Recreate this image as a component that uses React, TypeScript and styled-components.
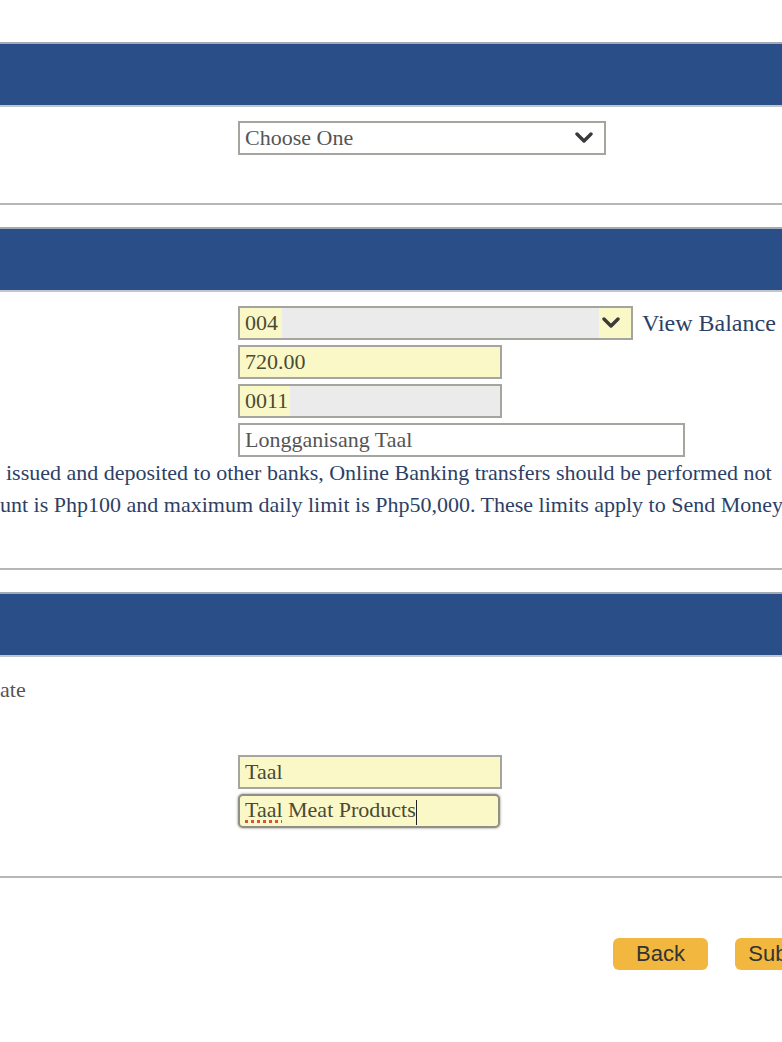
import React from "react";
import styled, { createGlobalStyle } from "styled-components";

const GlobalStyle = createGlobalStyle`
  html, body {
    margin: 0;
    padding: 0;
    background: #fff;
    overflow: hidden;
  }
  body {
    font-family: "Liberation Serif", "Times New Roman", serif;
  }
`;

const Page = styled.div`
  width: 782px;
  height: 1042px;
  overflow: hidden;
  padding-top: 42px;
  box-sizing: border-box;
`;

const Section = styled.section<{ gapTop?: number }>`
  margin-top: ${({ gapTop }) => gapTop ?? 0}px;
`;

const Band = styled.div`
  height: 61px;
  background: #2a4e88;
  border-top: 2px solid #a3aab5;
  border-bottom: 2px solid #c1c6ce;
`;

const Body = styled.div<{ pt: number; pb: number }>`
  padding: ${({ pt, pb }) => `${pt}px 0 ${pb}px`};
`;

const Rule = styled.div`
  height: 2px;
  background: #b7b7b7;
`;

const FieldColumn = styled.div`
  margin-left: 238px;
  display: flex;
  flex-direction: column;
  gap: 5px;
`;

const Row = styled.div`
  display: flex;
  align-items: center;
  gap: 9px;
`;

const Field = styled.div<{ w: number; bg?: string; focused?: boolean }>`
  position: relative;
  width: ${({ w }) => w}px;
  height: 34px;
  box-sizing: border-box;
  border: 2px solid ${({ focused }) => (focused ? "#8f8f86" : "#a5a5a0")};
  border-radius: ${({ focused }) => (focused ? "5px" : "0")};
  box-shadow: ${({ focused }) => (focused ? "0 0 2px 1px #c8c8c0" : "none")};
  background: ${({ bg }) => bg ?? "#fff"};
  display: flex;
  align-items: center;
  padding: 0 5px;
  font-size: 22px;
  color: #4a4a34;
  white-space: nowrap;
`;

const SelectText = styled.span<{ dark?: boolean }>`
  flex: 1;
  color: ${({ dark }) => (dark ? "#4a4a34" : "#555")};
`;

const Chevron = styled.svg`
  width: 18px;
  height: 12px;
  margin-right: 6px;
`;

const ViewBalance = styled.span`
  font-size: 24px;
  color: #2c3f66;
`;

const Note = styled.p<{ indent?: number }>`
  margin: 0 0 0 ${({ indent }) => indent ?? 0}px;
  font-size: 22px;
  line-height: 32px;
  color: #2d3f66;
  white-space: nowrap;
`;

const Label = styled.p`
  margin: 0;
  font-size: 22px;
  line-height: 32px;
  color: #555;
`;

const Plain = styled.span`
  color: #555;
`;

const Spell = styled.span`
  text-decoration: underline dotted #d9503c;
  text-decoration-thickness: 3px;
  text-underline-offset: 3px;
`;

const Caret = styled.span`
  display: inline-block;
  width: 1px;
  height: 25px;
  background: #222;
  vertical-align: middle;
`;

const Actions = styled.div`
  margin-top: 60px;
  margin-left: 613px;
  display: flex;
  gap: 27px;
`;

const Button = styled.button`
  width: 95px;
  height: 32px;
  flex-shrink: 0;
  border: none;
  border-radius: 6px;
  background: #f1b73f;
  font-family: "Liberation Sans", Arial, sans-serif;
  font-size: 22px;
  color: #333;
  padding: 0;
  text-align: center;
`;

const Arrow = () => (
  <Chevron viewBox="0 0 18 12">
    <polyline
      points="2,2 9,9 16,2"
      fill="none"
      stroke="#3a3a3a"
      strokeWidth="3.4"
      strokeLinecap="round"
      strokeLinejoin="round"
    />
  </Chevron>
);

const yellow = "#fbf8c8";
const redacted = (left: number, right = 0) =>
  `linear-gradient(to right, ${yellow} 0 ${left}px, #ebebeb ${left}px calc(100% - ${right}px), ${yellow} calc(100% - ${right}px))`;

export default function App() {
  return (
    <>
      <GlobalStyle />
      <Page>
        <Section>
          <Band />
          <Body pt={14} pb={48}>
            <FieldColumn>
              <Field w={368}>
                <SelectText>Choose One</SelectText>
                <Arrow />
              </Field>
            </FieldColumn>
          </Body>
          <Rule />
        </Section>

        <Section gapTop={22}>
          <Band />
          <Body pt={14} pb={47}>
            <FieldColumn>
              <Row>
                <Field w={395} bg={redacted(42, 32)}>
                  <SelectText dark>004</SelectText>
                  <Arrow />
                </Field>
                <ViewBalance>View Balance</ViewBalance>
              </Row>
              <Field w={264} bg={yellow}>720.00</Field>
              <Field w={264} bg={redacted(50)}>
                0011
              </Field>
              <Field w={447}>
                <Plain>Longganisang Taal</Plain>
              </Field>
            </FieldColumn>
            <Note indent={6}>
              issued and deposited to other banks, Online Banking transfers should be performed not
            </Note>
            <Note>
              unt is Php100 and maximum daily limit is Php50,000. These limits apply to Send Money
            </Note>
          </Body>
          <Rule />
        </Section>

        <Section gapTop={22}>
          <Band />
          <Body pt={17} pb={48}>
            <Label>ate</Label>
            <FieldColumn style={{ marginTop: 49 }}>
              <Field w={264} bg={yellow}>Taal</Field>
              <Field w={262} bg={yellow} focused>
                <span>
                  <Spell>Taal</Spell> Meat Products
                  <Caret />
                </span>
              </Field>
            </FieldColumn>
          </Body>
          <Rule />
        </Section>

        <Actions>
          <Button>Back</Button>
          <Button>Submit</Button>
        </Actions>
      </Page>
    </>
  );
}
